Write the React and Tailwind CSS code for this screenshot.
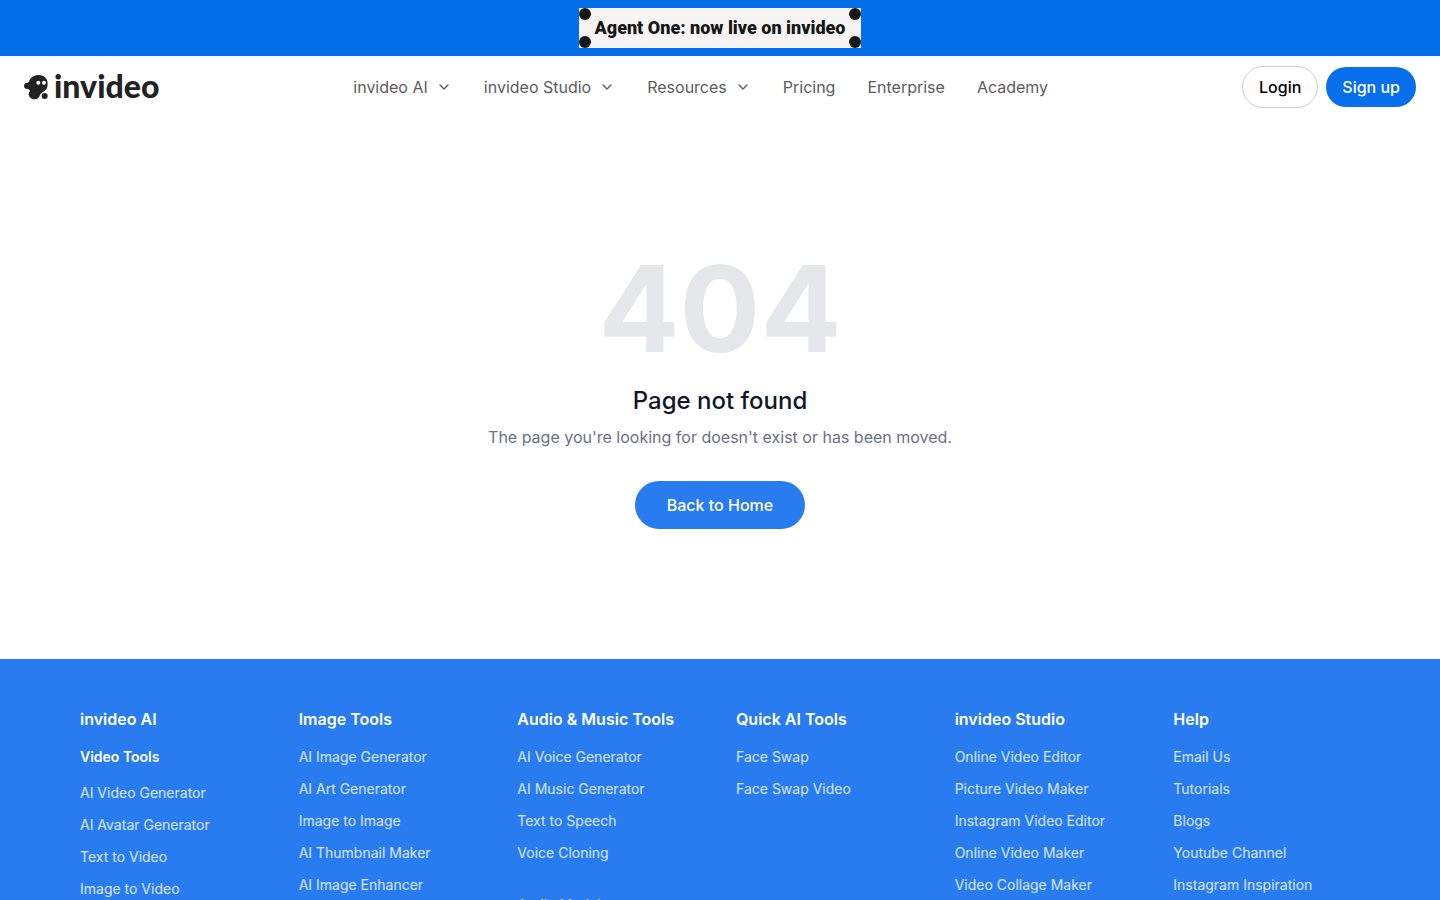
import React from 'react';
import { ChevronDown } from 'lucide-react';

const navItems = [
  { label: 'invideo AI', hasMenu: true },
  { label: 'invideo Studio', hasMenu: true },
  { label: 'Resources', hasMenu: true },
  { label: 'Pricing' },
  { label: 'Enterprise' },
  { label: 'Academy' }
];

const footerColumns = [
  {
    title: 'invideo AI',
    groups: [
      {
        heading: 'Video Tools',
        links: ['AI Video Generator', 'AI Avatar Generator', 'Text to Video', 'Image to Video']
      }
    ]
  },
  {
    title: 'Image Tools',
    groups: [
      {
        links: [
          'AI Image Generator',
          'AI Art Generator',
          'Image to Image',
          'AI Thumbnail Maker',
          'AI Image Enhancer'
        ]
      }
    ]
  },
  {
    title: 'Audio & Music Tools',
    groups: [
      { links: ['AI Voice Generator', 'AI Music Generator', 'Text to Speech', 'Voice Cloning'] },
      { links: ['Audio Models'] }
    ]
  },
  {
    title: 'Quick AI Tools',
    groups: [{ links: ['Face Swap', 'Face Swap Video'] }]
  },
  {
    title: 'invideo Studio',
    groups: [
      {
        links: [
          'Online Video Editor',
          'Picture Video Maker',
          'Instagram Video Editor',
          'Online Video Maker',
          'Video Collage Maker'
        ]
      }
    ]
  },
  {
    title: 'Help',
    groups: [
      { links: ['Email Us', 'Tutorials', 'Blogs', 'Youtube Channel', 'Instagram Inspiration'] }
    ]
  }
];

const GhostIcon = () => (
  <svg viewBox="0 0 72 78" className="w-6 h-[26px]" aria-hidden="true">
    <path
      fill="#222"
      d="M44 3C61 3 71 14 71 29C71 42 66 49 57 54C50 58 49 61 47 66C44 72 39 76 32 76C22 76 14 69 14 60C14 56 16 53 18 50C16 47 14 45 10 45C4 45 0 42 0 36C0 30 4 26 9 26C13 26 14 24 16 20C20 10 31 3 44 3Z"
    />
    <circle cx="62" cy="66" r="9" fill="#222" />
    <circle cx="43" cy="26" r="6" fill="#fff" />
    <circle cx="60" cy="26" r="6" fill="#fff" />
  </svg>
);

const Banner = () => (
  <div className="flex justify-center bg-[#026fea] py-2">
    <a
      href="#"
      className="relative flex h-10 items-center bg-[#f6f5f4] px-4 pb-0.5 font-['Roboto',sans-serif] text-[18px] font-black text-[#161616]"
    >
      <span className="absolute left-0 top-0 size-3 rounded-full bg-[#161616]" />
      <span className="absolute right-0 top-0 size-3 rounded-full bg-[#161616]" />
      <span className="absolute bottom-0 left-0 size-3 rounded-full bg-[#161616]" />
      <span className="absolute bottom-0 right-0 size-3 rounded-full bg-[#161616]" />
      Agent One: now live on invideo
    </a>
  </div>
);

const Header = () => (
  <header className="flex items-center justify-between border-b border-white px-6 py-2.5">
    <a href="#" className="flex items-center gap-1.5">
      <GhostIcon />
      <span className="pb-0.5 font-['Lato',sans-serif] text-[32px] leading-8 font-black text-[#222]">
        invideo
      </span>
    </a>

    <nav className="flex items-center gap-8 text-base text-[#5c5c5c]">
      {navItems.map((item) =>
        item.hasMenu ? (
          <button key={item.label} type="button" className="flex items-center gap-2">
            {item.label}
            <ChevronDown className="size-4" />
          </button>
        ) : (
          <a key={item.label} href="#">
            {item.label}
          </a>
        )
      )}
    </nav>

    <div className="flex items-center gap-2 text-base font-medium">
      <button type="button" className="rounded-full border border-[#cfcfcf] px-4 py-2 text-black">
        Login
      </button>
      <button type="button" className="rounded-full bg-[#086fec] px-4 py-2 text-white">
        Sign up
      </button>
    </div>
  </header>
);

const NotFound = () => (
  <main className="flex min-h-[60vh] flex-col items-center justify-center px-6 text-center">
    <h1 className="text-[120px] leading-none font-bold text-gray-200">404</h1>
    <h2 className="mt-4 text-2xl font-medium text-gray-900">Page not found</h2>
    <p className="mt-2 text-base text-gray-500">
      The page you're looking for doesn't exist or has been moved.
    </p>
    <a href="#" className="mt-8 rounded-full bg-[#287cf0] px-8 py-3 text-base font-medium text-white">
      Back to Home
    </a>
  </main>
);

const Footer = () => (
  <footer className="bg-[#287cf0] px-20 pt-12 text-white">
    <div className="grid grid-cols-6 gap-8">
      {footerColumns.map((column) => (
        <div key={column.title}>
          <h3 className="text-base font-semibold">{column.title}</h3>
          <div className="mt-4 flex flex-col gap-8">
            {column.groups.map((group, index) => (
              <div key={index} className="flex flex-col gap-4">
                {group.heading && <h4 className="text-sm font-semibold">{group.heading}</h4>}
                <ul className="flex flex-col gap-3 text-sm text-white/80">
                  {group.links.map((link) => (
                    <li key={link}>
                      <a href="#">{link}</a>
                    </li>
                  ))}
                </ul>
              </div>
            ))}
          </div>
        </div>
      ))}
    </div>
  </footer>
);

const App = () => (
  <div className="min-h-screen bg-white font-['Inter',sans-serif]">
    <Banner />
    <Header />
    <NotFound />
    <Footer />
  </div>
);

export default App;
